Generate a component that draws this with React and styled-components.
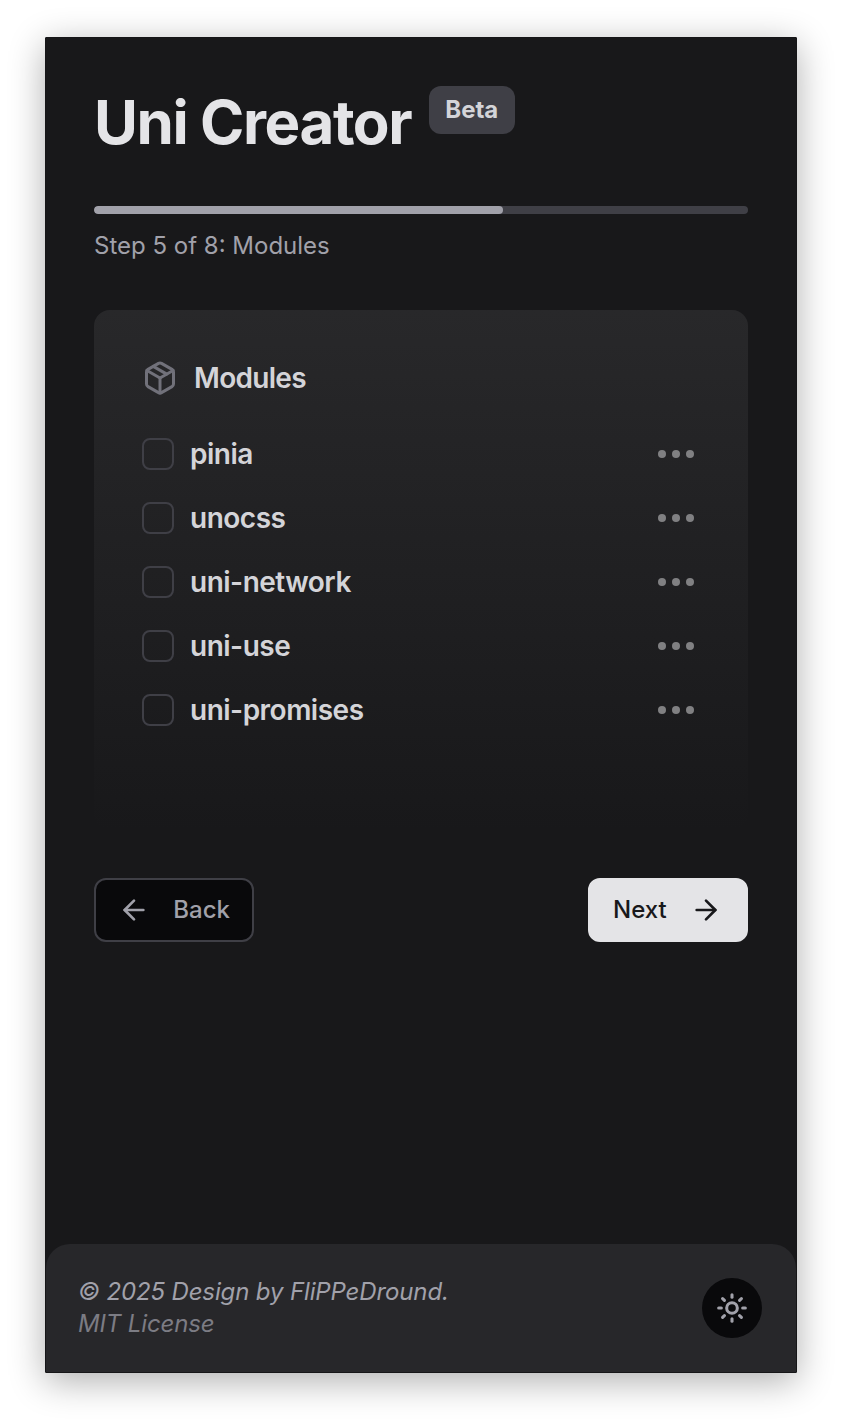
import React from 'react';
import styled, { createGlobalStyle } from 'styled-components';
import { ArrowLeft, ArrowRight, Package, Sun } from 'lucide-react';

const Global = createGlobalStyle`
  *, *::before, *::after { box-sizing: border-box; }
  body { margin: 0; background: #fff; font-family: Inter, "Liberation Sans", sans-serif; -webkit-font-smoothing: antialiased; }
`;
const Stage = styled.div`
  height: 1426px;
  padding: 37px 45px 53px;
  overflow: hidden;
`;
const Page = styled.div`
  height: 1336px;
  display: flex;
  flex-direction: column;
  justify-content: space-between;
  background: #18181a;
  border: 1px solid #161618;
  border-radius: 1px;
  overflow: hidden;
  box-shadow: 0 8px 36px rgba(0, 0, 0, 0.32);
`;
const Main = styled.main`
  padding: 48px 48px 0;
`;
const Header = styled.header`
  display: flex;
  align-items: flex-start;
  gap: 18px;
  height: 120px;
`;
const Title = styled.h1`
  margin: 0;
  font-size: 60px;
  line-height: 72px;
  font-weight: 700;
  letter-spacing: -1.42px;
  color: #e4e4e7;
  white-space: nowrap;
`;
const Badge = styled.span`
  height: 48px;
  padding: 0 17px 0 16px;
  border-radius: 12px;
  background: #3f3f46;
  color: #d4d4d8;
  font-size: 24px;
  line-height: 47px;
  font-weight: 700;
`;
const Track = styled.div`
  height: 8px;
  border-radius: 4px;
  background: #3f3f46;
  overflow: hidden;
`;
const Progress = styled.div`
  width: 62.5%;
  height: 8px;
  border-radius: 4px;
  background: #a1a1aa;
`;
const Step = styled.p`
  margin: 16px 0 0;
  font-size: 24px;
  line-height: 32px;
  color: #a1a1aa;
`;
const Card = styled.section`
  margin-top: 48px;
  height: 520px;
  padding: 48px;
  border-radius: 16px;
  background: linear-gradient(#28282a, #18181a);
`;
const CardTitle = styled.h2`
  margin: 0 0 24px;
  display: flex;
  align-items: center;
  gap: 16px;
  height: 40px;
  font-size: 28px;
  font-weight: 600;
  letter-spacing: -0.7px;
  color: #d4d4d8;
  svg { color: #71717a; }
`;
const List = styled.div`
  display: flex;
  flex-direction: column;
`;
const Row = styled.div`
  display: flex;
  align-items: center;
  height: 64px;
  color: #d4d4d8;
  font-size: 28px;
  font-weight: 600;
  letter-spacing: -0.5px;
`;
const Checkbox = styled.span`
  width: 32px;
  height: 32px;
  margin-right: 16px;
  border: 2px solid #3f3f46;
  border-radius: 8px;
`;
const More = styled.span`
  margin-left: auto;
  margin-right: 6px;
  display: flex;
  gap: 6px;
`;
const Dot = styled.i`
  width: 8px;
  height: 8px;
  border-radius: 50%;
  background: #808082;
`;
const Actions = styled.div`
  margin-top: 48px;
  display: flex;
  justify-content: space-between;
`;
const Button = styled.button`
  width: 160px;
  height: 64px;
  padding: 0 ${(p) => (p.$primary ? '24px 0 23px' : '22px')};
  display: flex;
  align-items: center;
  justify-content: space-between;
  border-radius: 12px;
  border: 2px solid ${(p) => (p.$primary ? '#e4e4e7' : '#3f3f46')};
  background: ${(p) => (p.$primary ? '#e4e4e7' : '#09090b')};
  color: ${(p) => (p.$primary ? '#18181b' : '#a1a1aa')};
  font: 500 24px Inter, sans-serif;
`;
const Label = styled.span`
  height: 30px;
  line-height: 30px;
`;
const Footer = styled.footer`
  height: 128px;
  padding: 0 34px 0 32px;
  display: flex;
  align-items: center;
  justify-content: space-between;
  border-radius: 24px 24px 0 0;
  background: #27272a;
  font-size: 24px;
  line-height: 32px;
  font-style: italic;
  letter-spacing: -0.13px;
  color: #a1a1aa;
`;
const Credits = styled.div`
  padding-bottom: 1px;
`;
const License = styled.div`
  color: #7c7c84;
`;
const ThemeToggle = styled.button`
  width: 60px;
  height: 60px;
  padding: 0;
  border: 0;
  border-radius: 50%;
  background: #09090b;
  color: #a1a1aa;
  display: grid;
  place-items: center;
`;

const modules = ['pinia', 'unocss', 'uni-network', 'uni-use', 'uni-promises'];

export default function App() {
  return (
    <Stage>
      <Global />
      <Page>
        <Main>
          <Header>
            <Title>Uni Creator</Title>
            <Badge>Beta</Badge>
          </Header>
          <Track><Progress /></Track>
          <Step>Step 5 of 8: Modules</Step>
          <Card>
            <CardTitle>
              <Package size={36} />
              Modules
            </CardTitle>
            <List>
              {modules.map((m) => (
                <Row key={m}>
                  <Checkbox />
                  {m}
                  <More><Dot /><Dot /><Dot /></More>
                </Row>
              ))}
            </List>
          </Card>
          <Actions>
            <Button>
              <ArrowLeft size={32} />
              <Label>Back</Label>
            </Button>
            <Button $primary>
              <Label>Next</Label>
              <ArrowRight size={32} />
            </Button>
          </Actions>
        </Main>
        <Footer>
          <Credits>
            <div>© 2025 Design by FliPPeDround.</div>
            <License>MIT License</License>
          </Credits>
          <ThemeToggle>
            <Sun size={32} strokeWidth={2.3} />
          </ThemeToggle>
        </Footer>
      </Page>
    </Stage>
  );
}
